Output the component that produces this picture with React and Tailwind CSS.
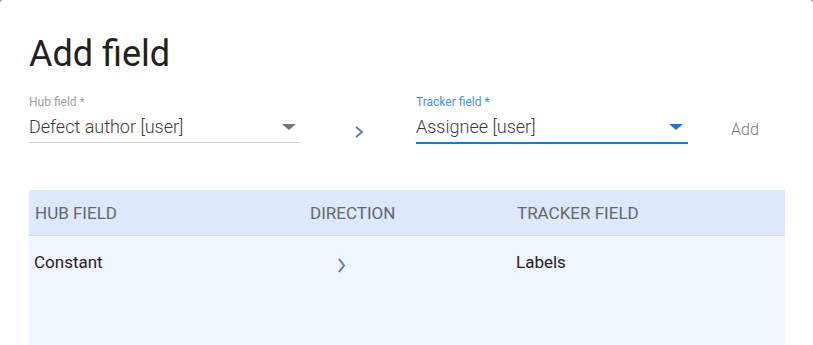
import React from "react";

function Triangle({ color }) {
  return (
    <span
      className={`mr-[5px] h-0 w-0 border-l-[7px] border-r-[7px] border-t-[6px] border-l-transparent border-r-transparent ${color}`}
    />
  );
}

function Chevron({ className, w = 10, h = 12 }) {
  return (
    <svg width={w} height={h} viewBox={`0 0 ${w} ${h}`} className={className}>
      <polyline
        points={`2,1 ${w - 2},${h / 2} 2,${h - 1}`}
        fill="none"
        stroke="#5b7bb9"
        strokeWidth="2"
      />
    </svg>
  );
}

function SelectField({ label, value, focused }) {
  return (
    <div className="w-[272px]">
      <div
        className={`text-[12px] leading-[16px] ${focused ? "text-[#3d95ec]" : "text-[#a0a0a0]"}`}
      >
        {label}
      </div>
      <div
        className={`mt-[5px] flex items-center justify-between pb-[3px] ${
          focused ? "border-b-2 border-[#1677e0]" : "border-b border-[#d4d4d4]"
        }`}
      >
        <span className="text-[18px] font-light leading-[24px] text-[#3a3a3a]">{value}</span>
        <Triangle color={focused ? "border-t-[#1677e0]" : "border-t-[#757575]"} />
      </div>
    </div>
  );
}

export default function App() {
  return (
    <div className="h-[345px] w-[813px] overflow-hidden bg-[#9a9a9a]">
      <div
        className="h-full rounded-t-[4px] bg-white pl-[29px] pr-[28px] pt-[32px]"
        style={{ fontFamily: "Roboto, 'Liberation Sans', sans-serif" }}
      >
        <h1 className="text-[36px] font-normal leading-[44px] text-[#222]">Add field</h1>

        <div className="mt-[18px] flex items-start">
          <SelectField label="Hub field *" value="Defect author [user]" />
          <div className="flex w-[115px] justify-center pt-[32px]">
            <Chevron />
          </div>
          <SelectField label="Tracker field *" value="Assignee [user]" focused />
          <button
            type="button"
            className="ml-[43px] pt-[26px] text-[16px] font-light leading-[20px] text-[#777]"
          >
            Add
          </button>
        </div>

        <div className="mt-[46px] w-[756px]">
          <div className="grid h-[46px] grid-cols-[275px_207px_1fr] border-b border-[#cfd9ea] bg-[#dde8fc] pt-[13px] text-[17px] leading-[21px] text-[#666]">
            <div className="pl-[6px]">HUB FIELD</div>
            <div className="pl-[6px]">DIRECTION</div>
            <div className="pl-[6px]">TRACKER FIELD</div>
          </div>
          <div className="grid h-[120px] grid-cols-[275px_207px_1fr] bg-[#f0f5fe] pt-[16px] text-[17px] leading-[21px] text-[#222]">
            <div className="pl-[5px]">Constant</div>
            <div className="pl-[33px] pt-[6px]">
              <Chevron w={9} h={15} />
            </div>
            <div className="pl-[5px]">Labels</div>
          </div>
        </div>
      </div>
    </div>
  );
}
